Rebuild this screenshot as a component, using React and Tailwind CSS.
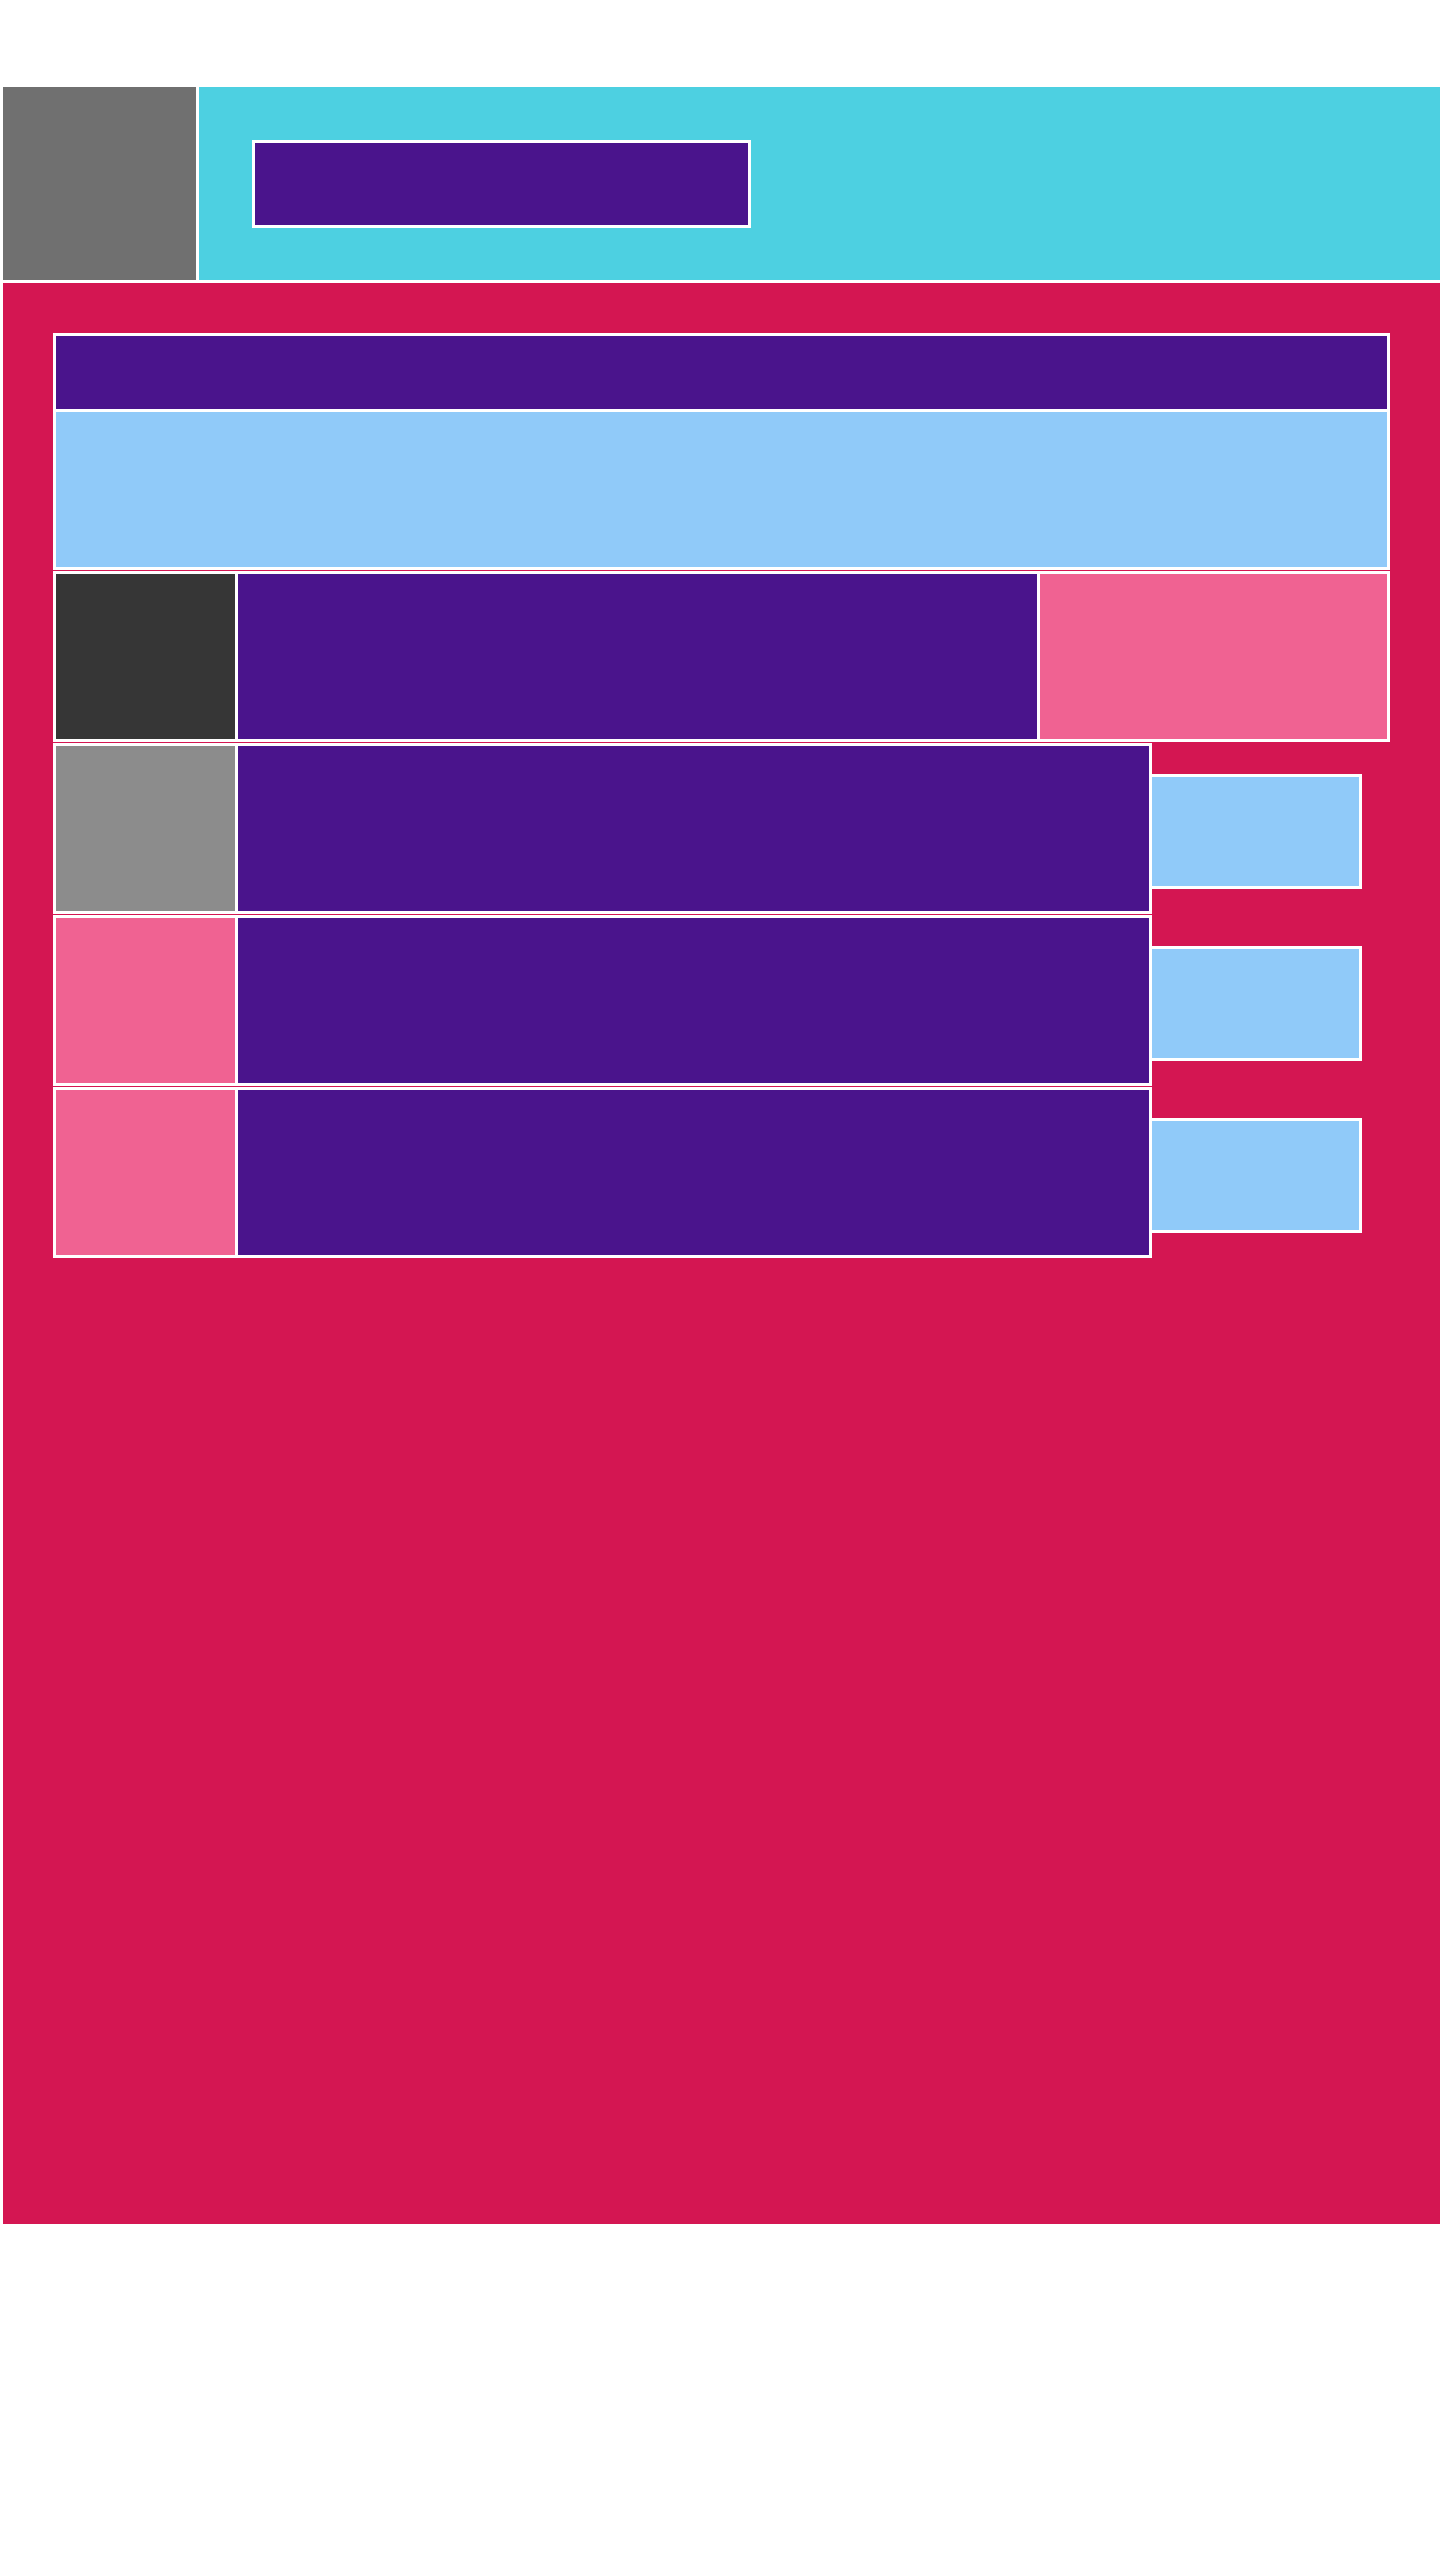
import React from 'react';

const rows = [
    { id: 2, thumb: 'bg-[#8c8c8c]' },
    { id: 3, thumb: 'bg-[#f06292]' },
    { id: 4, thumb: 'bg-[#f06292]' }
];

function App() {
    return (
        <div className="min-h-[2560px] bg-white pt-[87px]">
            {/* Header */}
            <header className="flex h-[193px] gap-[3px] pl-[3px]">
                <div className="w-[193px] bg-[#707070]" />
                <div className="flex flex-1 items-center bg-[#4dd0e1] pl-[53px]">
                    <div className="h-[88px] w-[499px] border-[3px] border-white bg-[#4a148c]" />
                </div>
            </header>

            {/* Main */}
            <main className="ml-[3px] mt-[3px] h-[1941px] bg-[#d41652] p-[50px]">
                <div className="flex flex-col gap-px">
                    {/* Title block */}
                    <div className="flex flex-col gap-[3px] border-[3px] border-white bg-white">
                        <div className="h-[73px] bg-[#4a148c]" />
                        <div className="h-[155px] bg-[#90caf9]" />
                    </div>

                    {/* First row */}
                    <div className="flex h-[171px] gap-[3px] border-[3px] border-white bg-white">
                        <div className="w-[179px] bg-[#363636]" />
                        <div className="w-[799px] bg-[#4a148c]" />
                        <div className="flex-1 bg-[#f06292]" />
                    </div>

                    {/* List rows */}
                    {rows.map((row) => (
                        <div key={row.id} className="flex items-start">
                            <div className="flex h-[171px] w-[1099px] gap-[3px] border-[3px] border-white bg-white">
                                <div className={`w-[179px] ${row.thumb}`} />
                                <div className="flex-1 bg-[#4a148c]" />
                            </div>
                            <div className="mt-[31px] h-[115px] w-[210px] border-y-[3px] border-r-[3px] border-white bg-[#90caf9]" />
                        </div>
                    ))}
                </div>
            </main>
        </div>
    );
}

export default App;
